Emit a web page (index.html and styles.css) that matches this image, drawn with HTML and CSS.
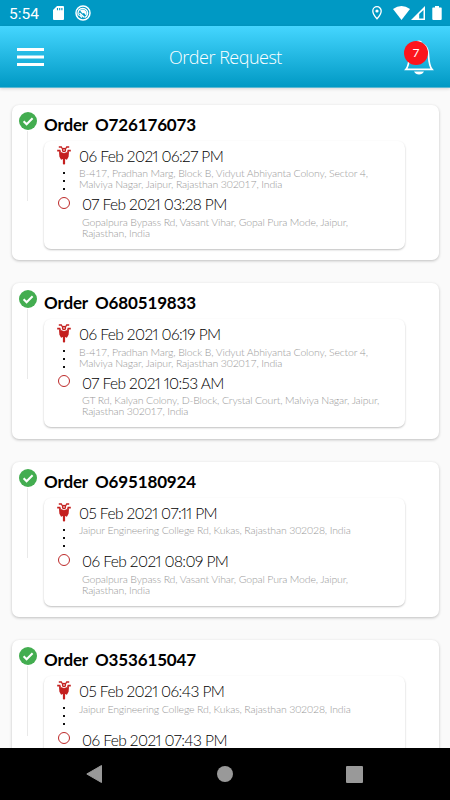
FILE: index.html
```html
<!DOCTYPE html>
<html lang="en">
<head>
  <meta charset="UTF-8" />
  <meta name="viewport" content="width=device-width, initial-scale=1.0"/>
  <title>Order Request</title>
  <link rel="stylesheet" href="styles.css">
</head>
<body>
  <!-- shared icons -->
  <svg class="sprite" width="0" height="0">
    <symbol id="check" viewBox="0 0 18 18">
      <circle cx="9" cy="9" r="9" fill="#43ad50"/>
      <path d="M4.600 9.300l3 3 6-6" fill="none" stroke="#fff" stroke-width="2.100"/>
    </symbol>
    <symbol id="bike" viewBox="0 0 14 20">
      <g fill="none" stroke="#c4201f" stroke-width="1.300">
        <path d="M1.800 1h2.500l1.500 2.500M12.200 1H9.700L8.200 3.500M3.500 6L2.300 4.500M10.500 6l1.200-1.500"/>
      </g>
      <path d="M.2 3.800h3.200v1.600H.2zM10.600 3.800h3.200v1.600h-3.200z" fill="#c4201f"/>
      <circle cx="7" cy="4" r="2.200" fill="#c4201f"/>
      <circle cx="7" cy="4" r=".8" fill="#fff"/>
      <path d="M2 6l2.600.2L7 7.300l2.400-1.100L12 6l-.4 4.800-1.700 3L7 12.500l-2.900 1.300-1.700-3z" fill="#c4201f"/>
      <path d="M5.900 11.500h2.200v6L7 19l-1.100-1.500z" fill="#c4201f"/>
    </symbol>
  </svg>

  <div class="statusbar">
    <span class="time">5:54</span>
    <svg class="sd" width="11" height="14" viewBox="0 0 11 14"><path d="M4 0h6q1 0 1 1v12q0 1-1 1H1q-1 0-1-1V4z" fill="#fff"/><path d="M4.500 2v2.300M6.700 2v2.300M8.900 2v2.300" stroke="#0099c4" stroke-width="1.100"/></svg>
    <svg class="app" width="16" height="16" viewBox="0 0 16 16" fill="none" stroke="#fff"><circle cx="8" cy="8" r="7" stroke-width="1.500"/><path d="M3.600 10.500A4.800 4.800 0 1 1 10 12.400" stroke-width="1.300"/><path d="M5 5.500q3-2 5.800.5 1.700 2 .4 4.800L9 8 7.500 8.500z" fill="#fff" stroke="none"/><path d="M4.500 8l5 4.500M4.500 10l2.500 2.500" stroke-width="1.400"/></svg>
    <span class="spacer"></span>
    <svg class="pin" width="10" height="14" viewBox="0 0 10 14"><path d="M5 .7a4.200 4.200 0 0 0-4.200 4.200C.8 8 5 12.800 5 12.800S9.200 8 9.200 4.900A4.200 4.200 0 0 0 5 .7z" fill="none" stroke="#fff" stroke-width="1.300"/><circle cx="5" cy="5" r="1.600" fill="#fff"/></svg>
    <svg class="wifi" width="17" height="14" viewBox="0 0 17 14"><path d="M0 3q8.500-6 17 0L8.500 14z" fill="#fff"/></svg>
    <svg class="signal" width="14" height="14" viewBox="0 0 14 14"><path d="M14 0v14H0z" fill="#fff"/><path d="M12.500 4v8.500H8.200V8z" fill="#0099c4"/></svg>
    <svg class="battery" width="10" height="14" viewBox="0 0 10 14"><path d="M3 0h4v1.500h2q.7 0 .7.700V13q0 1-1 1H1.300q-1 0-1-1V2.200q0-.7.700-.7h2z" fill="#fff"/></svg>
  </div>

  <div class="header">
    <svg class="menu" width="27" height="18" viewBox="0 0 27 18"><path d="M0 1.500h27M0 9h27M0 16.500h27" stroke="#fff" stroke-width="3"/></svg>
    <h1>Order Request</h1>
    <div class="bell">
      <svg width="30" height="36" viewBox="0 0 30 36"><path d="M11.500 3.500a4 4 0 0 1 7 0z" fill="#fff"/><path d="M2 30.300C5 27 5 23 5.500 16 6 8 9.500 4.500 15 4.500S24 8 24.500 16c.5 7 .5 11 3.500 14.300z" fill="none" stroke="#fff" stroke-width="1.700"/><path d="M10 32.500h10q-1.500 3-5 3t-5-3z" fill="#fff"/></svg>
      <span class="badge">7</span>
    </div>
  </div>

  <div class="orders">
    <div class="order-card">
      <div class="rail"><svg width="18" height="18"><use href="#check"/></svg></div>
      <div class="order-main">
        <h2><span class="label">Order</span><span class="number">O726176073</span></h2>
        <div class="trip">
          <div class="track"><svg width="14" height="20"><use href="#bike"/></svg><i></i><i></i><i></i><b></b></div>
          <div class="stops">
            <div class="stop pickup">
              <p class="date">06 Feb 2021 06:27 PM</p>
              <p class="address">B-417, Pradhan Marg, Block B, Vidyut Abhiyanta Colony, Sector 4,<br>Malviya Nagar, Jaipur, Rajasthan 302017, India</p>
            </div>
            <div class="stop drop">
              <p class="date">07 Feb 2021 03:28 PM</p>
              <p class="address">Gopalpura Bypass Rd, Vasant Vihar, Gopal Pura Mode, Jaipur,<br>Rajasthan, India</p>
            </div>
          </div>
        </div>
      </div>
    </div>

    <div class="order-card">
      <div class="rail"><svg width="18" height="18"><use href="#check"/></svg></div>
      <div class="order-main">
        <h2><span class="label">Order</span><span class="number">O680519833</span></h2>
        <div class="trip">
          <div class="track"><svg width="14" height="20"><use href="#bike"/></svg><i></i><i></i><i></i><b></b></div>
          <div class="stops">
            <div class="stop pickup">
              <p class="date">06 Feb 2021 06:19 PM</p>
              <p class="address">B-417, Pradhan Marg, Block B, Vidyut Abhiyanta Colony, Sector 4,<br>Malviya Nagar, Jaipur, Rajasthan 302017, India</p>
            </div>
            <div class="stop drop">
              <p class="date">07 Feb 2021 10:53 AM</p>
              <p class="address">GT Rd, Kalyan Colony, D-Block, Crystal Court, Malviya Nagar, Jaipur,<br>Rajasthan 302017, India</p>
            </div>
          </div>
        </div>
      </div>
    </div>

    <div class="order-card">
      <div class="rail"><svg width="18" height="18"><use href="#check"/></svg></div>
      <div class="order-main">
        <h2><span class="label">Order</span><span class="number">O695180924</span></h2>
        <div class="trip">
          <div class="track"><svg width="14" height="20"><use href="#bike"/></svg><i></i><i></i><i></i><b></b></div>
          <div class="stops">
            <div class="stop pickup">
              <p class="date">05 Feb 2021 07:11 PM</p>
              <p class="address">Jaipur Engineering College Rd, Kukas, Rajasthan 302028, India</p>
            </div>
            <div class="stop drop">
              <p class="date">06 Feb 2021 08:09 PM</p>
              <p class="address">Gopalpura Bypass Rd, Vasant Vihar, Gopal Pura Mode, Jaipur,<br>Rajasthan, India</p>
            </div>
          </div>
        </div>
      </div>
    </div>

    <div class="order-card">
      <div class="rail"><svg width="18" height="18"><use href="#check"/></svg></div>
      <div class="order-main">
        <h2><span class="label">Order</span><span class="number">O353615047</span></h2>
        <div class="trip">
          <div class="track"><svg width="14" height="20"><use href="#bike"/></svg><i></i><i></i><i></i><b></b></div>
          <div class="stops">
            <div class="stop pickup">
              <p class="date">05 Feb 2021 06:43 PM</p>
              <p class="address">Jaipur Engineering College Rd, Kukas, Rajasthan 302028, India</p>
            </div>
            <div class="stop drop">
              <p class="date">06 Feb 2021 07:43 PM</p>
            </div>
          </div>
        </div>
      </div>
    </div>
  </div>

  <div class="navbar">
    <svg width="17" height="18" viewBox="0 0 17 18"><path d="M15.500.5v17L.8 9z" fill="#999" stroke="#999" stroke-linejoin="round"/></svg>
    <svg width="16" height="16" viewBox="0 0 16 16"><circle cx="8" cy="8" r="8" fill="#999"/></svg>
    <svg width="17" height="17" viewBox="0 0 17 17"><rect width="17" height="17" rx="1" fill="#999"/></svg>
  </div>
</body>
</html>
```
FILE: styles.css
```css
* {
  box-sizing: border-box;
}
body {
  margin: 0;
  height: 800px;
  overflow: hidden;
  display: flex;
  flex-direction: column;
  background: #fafafa;
  font-family: Lato, sans-serif;
  color: #000;
}
svg {
  display: block;
  flex: none;
}
.sprite {
  position: absolute;
}
.statusbar {
  height: 26px;
  flex: none;
  display: flex;
  align-items: center;
  padding: 0 8px 0 9px;
  background: #0099c4;
  color: #fff;
}
.time {
  width: 44px;
  font: 15.5px Roboto, sans-serif;
  padding-top: 2px;
}
.app {
  margin-left: 11px;
}
.spacer {
  flex: 1;
}
.wifi {
  margin-left: 11px;
}
.signal {
  margin-left: 1px;
}
.battery {
  margin-left: 7px;
}
.header {
  height: 62px;
  flex: none;
  display: flex;
  align-items: center;
  justify-content: space-between;
  padding: 0 16px 0 17px;
  background: linear-gradient(#45d6ff, #0099c4);
  border-bottom: 1px solid #58b8d3;
  box-shadow: 0 1px 3px rgba(0,0,0,0.15);
  color: #fff;
}
.header h1 {
  margin: 1px 0 0 3px;
  font-family: "Open Sans", sans-serif;
  font-size: 18px;
  font-weight: 350;
  line-height: 24px;
  letter-spacing: -0.5px;
}
.bell {
  position: relative;
}
.badge {
  position: absolute;
  left: 0;
  top: 2px;
  width: 24px;
  height: 24px;
  border-radius: 50%;
  background: #fc151c;
  font-size: 12px;
  line-height: 24px;
  text-align: center;
}
.orders {
  flex: 1;
  min-height: 0;
  overflow: hidden;
  padding: 16.5px 11.5px 0;
}
.order-card {
  height: 155.5px;
  margin-bottom: 23px;
  display: flex;
  padding: 7px 0 0 7.5px;
  background: #fff;
  border-radius: 7px;
  box-shadow: 0 1px 3px rgba(0,0,0,0.24);
}
.rail {
  width: 25px;
  display: flex;
  flex-direction: column;
}
.rail::after {
  content: "";
  width: 1.5px;
  height: 70px;
  margin: 1px 0 0 7.5px;
  background: #e9e9e9;
}
.order-main {
  width: 361px;
}
.order-main h2 {
  display: flex;
  margin: 0;
  height: 29px;
  font-size: 17px;
  font-weight: 700;
  line-height: 25px;
  letter-spacing: -0.15px;
}
.label {
  width: 51px;
}
.trip {
  height: 108px;
  display: flex;
  border-radius: 7px;
  box-shadow: 0 1px 2px rgba(0,0,0,0.25);
}
.track {
  width: 35px;
  padding: 5px 0 0 5px;
  display: flex;
  flex-direction: column;
  align-items: center;
}
.track i {
  width: 2px;
  height: 2px;
  margin-top: 6px;
  background: #111;
}
.track b {
  width: 12px;
  height: 12px;
  margin-top: 7px;
  border: 1.5px solid #bd2929;
  border-radius: 50%;
}
.stops {
  padding-top: 6px;
}
.stop p {
  margin: 0;
  white-space: nowrap;
}
.pickup {
  height: 48.5px;
}
.drop {
  padding-left: 3px;
}
.stop .date {
  height: 21.5px;
  font-size: 15.5px;
  font-weight: 300;
  line-height: 19px;
  font-variant-numeric: proportional-nums;
  letter-spacing: -0.57px;
}
.address {
  font-size: 10.5px;
  font-weight: 300;
  line-height: 11px;
  letter-spacing: -0.15px;
  color: #999;
}
.navbar {
  height: 52px;
  flex: none;
  display: flex;
  align-items: center;
  justify-content: space-between;
  padding: 0 87px 0 86px;
  background: #000;
}
```
